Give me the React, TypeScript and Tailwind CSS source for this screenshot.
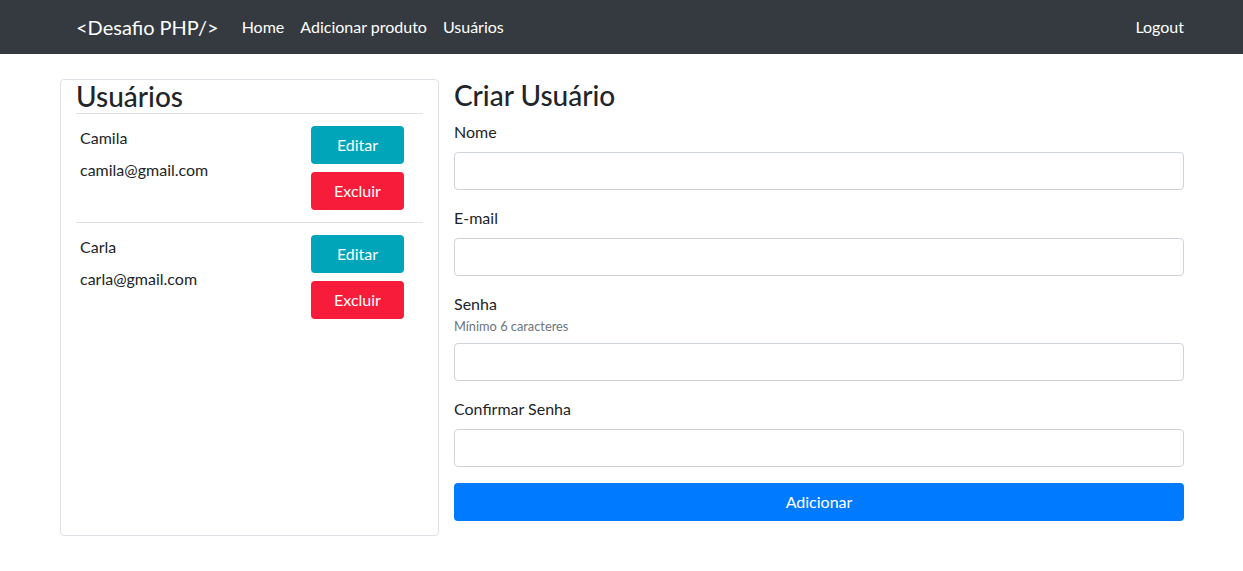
import React from 'react'

type User = {
    name: string
    email: string
}

const users: User[] = [
    { name: 'Camila', email: 'camila@gmail.com' },
    { name: 'Carla', email: 'carla@gmail.com' },
]

function Field({ label, hint }: { label: string; hint?: string }) {
    return (
        <div className="mb-4">
            <label className="block text-[16px] leading-6 text-[#212529]">{label}</label>
            {hint ? (
                <small className="block mt-[1px] mb-[7px] text-[12.8px] leading-[19px] text-[#6c757d]">{hint}</small>
            ) : (
                <div className="h-2" />
            )}
            <input
                type="text"
                className="block w-full h-[38px] rounded-[4px] border border-[#ced4da] bg-white px-3 outline-none"
            />
        </div>
    )
}

export default function App() {
    return (
        <div className="min-h-screen bg-white text-[#212529] font-['Lato','Liberation_Sans',sans-serif]">
            <nav className="flex items-center h-[54px] bg-[#343a40] pl-[76px] pr-[59px]">
                <a className="text-[20px] text-white mr-[15px]">&lt;Desafio PHP/&gt;</a>
                <div className="flex items-center">
                    <a className="px-2 text-[16px] text-white">Home</a>
                    <a className="px-2 text-[16px] text-white">Adicionar produto</a>
                    <a className="px-2 text-[16px] text-white">Usuários</a>
                </div>
                <a className="ml-auto text-[16px] text-white">Logout</a>
            </nav>

            <main className="flex gap-[15px] pl-[60px] pr-[59px] pt-[25px]">
                <div className="w-[379px] h-[457px] shrink-0 rounded-[4px] border border-[#dee2e6] px-[15px]">
                    <h2 className="text-[28px] leading-[33px] font-medium border-b border-[#dee2e6]">Usuários</h2>
                    {users.map((user, i) => (
                        <div
                            key={user.email}
                            className={`flex justify-between pt-3 pb-[12px] pl-1 pr-[19px] ${i === 0 ? 'border-b border-[#dee2e6]' : ''}`}
                        >
                            <div className="flex flex-col gap-2 text-[16px] leading-6">
                                <span>{user.name}</span>
                                <span>{user.email}</span>
                            </div>
                            <div className="flex flex-col gap-2 w-[93px]">
                                <button className="h-[38px] rounded-[4px] bg-[#00a5ba] text-white text-[16px]">Editar</button>
                                <button className="h-[38px] rounded-[4px] bg-[#f61c3a] text-white text-[16px]">Excluir</button>
                            </div>
                        </div>
                    ))}
                </div>

                <div className="flex-1">
                    <h2 className="text-[28px] leading-[33px] font-medium mb-2">Criar Usuário</h2>
                    <Field label="Nome" />
                    <Field label="E-mail" />
                    <Field label="Senha" hint="Mínimo 6 caracteres" />
                    <Field label="Confirmar Senha" />
                    <button className="w-full h-[38px] rounded-[4px] bg-[#007bff] text-white text-[16px]">Adicionar</button>
                </div>
            </main>
        </div>
    )
}
